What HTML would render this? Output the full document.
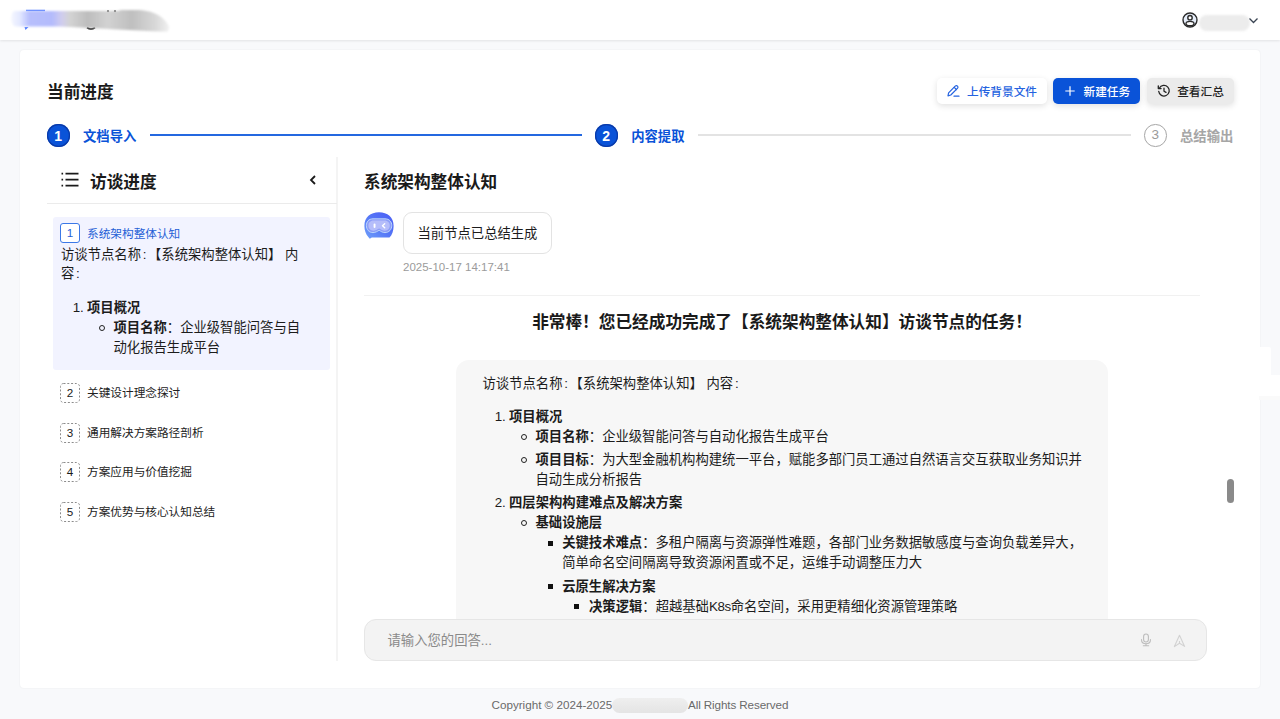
<!DOCTYPE html>
<html lang="zh-CN">
<head>
<meta charset="utf-8">
<title>当前进度</title>
<style>
*{box-sizing:border-box;margin:0;padding:0}
html,body{width:1280px;height:719px;overflow:hidden}
body{background:#f8f9fb;font-family:"Liberation Sans","Noto Sans CJK SC",sans-serif;color:#1a1a1a;font-size:13px;position:relative}
.abs{position:absolute}
#hdr{left:0;top:0;width:1280px;height:40px;background:#fff;box-shadow:0 1px 2.500px rgba(0,0,0,.09)}
#uname{left:1199px;top:15px;width:51px;height:16px;border-radius:8px;background:#ececec;filter:blur(1px)}
#card{left:20px;top:50px;width:1240px;height:638px;background:#fff;border-radius:4px;box-shadow:0 0 2px rgba(0,0,0,.07)}
#title{left:47px;top:80.500px;font-size:16.670px;font-weight:700;line-height:24px;color:#1a1a1a}
.btn{top:77.500px;height:26.500px;border-radius:5px;font-size:11.670px;line-height:27.500px;font-weight:500;white-space:nowrap;box-shadow:0 2px 6px rgba(0,0,0,.12)}
.step-c{width:22.500px;height:22.500px;border-radius:50%;top:124px;font-size:14px;line-height:24.500px;text-align:center;font-weight:700}
.step-t{top:126.500px;font-size:13.330px;line-height:20px;font-weight:700;white-space:nowrap}
.line{height:1.500px;top:134.200px}
.ft{top:696px;font-size:11.670px;color:#6a6a6a;line-height:18px;white-space:nowrap}

.h2{font-size:16.670px;font-weight:700;line-height:24px;white-space:nowrap;color:#1a1a1a}
.t{font-size:13.330px;line-height:20px;white-space:nowrap;color:#1c1c1c}
.t b{font-weight:700}
.c{padding:0 1.700px}
.n{position:absolute;right:100%;margin-right:3.200px;top:0}
.nb{width:20px;height:20px;left:60px;border-radius:3px;font-size:11.670px;line-height:18px;text-align:center}
.nb.d{border:1px dashed #9a9a9a;color:#222}
.it{left:87px;font-size:11.670px;line-height:20px;white-space:nowrap;color:#222}
.bc{width:6px;height:6px;border:1.100px solid #222;border-radius:50%;margin:-.5px 0 0 -.3px}
.bs{width:5px;height:5px;background:#111;margin-top:-.2px}
</style>
</head>
<body>
<div id="hdr" class="abs"></div>
<svg class="abs" style="left:0;top:0" width="200" height="40" viewBox="0 0 200 40">
<defs>
<filter id="bl" x="-10%" y="-60%" width="120%" height="220%"><feGaussianBlur stdDeviation="1.100"/></filter>
<linearGradient id="lg" x1="10" x2="172" y1="0" y2="0" gradientUnits="userSpaceOnUse">
<stop offset="0" stop-color="#f6f8ff"/><stop offset=".06" stop-color="#e4e9ff"/><stop offset=".12" stop-color="#b7bffd"/><stop offset=".26" stop-color="#b4bbfc"/><stop offset=".32" stop-color="#d0cdee"/><stop offset=".37" stop-color="#d3d3d3"/><stop offset=".48" stop-color="#bdbdbd"/><stop offset=".6" stop-color="#d2d2d2"/><stop offset=".75" stop-color="#bfbfbf"/><stop offset=".9" stop-color="#d9d9d9"/><stop offset="1" stop-color="#f6f6f6"/>
</linearGradient>
</defs>
<path d="M26 10.500H45" stroke="#4f7dff" stroke-width="1.500"/>
<path d="M24.500 27L28.500 27L25.500 30Z" fill="#4f7dff"/>
<circle cx="108" cy="11.300" r="1.100" fill="#111"/><circle cx="115" cy="11.300" r="1.100" fill="#111"/>
<path d="M87 27.500Q91 30.500 95 27.500" stroke="#111" stroke-width="1.600" fill="none"/>
<path d="M15 11H118L121 10H140C155 11 166 18 169 27L168 31.500C150 31.500 120 29.500 90 28L60 26.500H16C10 26 10 11 15 11Z" fill="url(#lg)" filter="url(#bl)"/>
</svg>
<svg class="abs" style="left:1180.600px;top:11px" width="18" height="18" viewBox="0 0 18 18" fill="none" stroke="#2b2b2b" stroke-width="1.400"><circle cx="9" cy="9" r="7" fill="#e6eefa"/><circle cx="9" cy="6.700" r="2.200" fill="#fff"/><ellipse cx="9" cy="12.600" rx="4" ry="2.200" fill="#fff"/></svg>
<div id="uname" class="abs"></div>
<svg class="abs" style="left:1248px;top:16.500px" width="11" height="8" viewBox="0 0 11 8" fill="none" stroke="#3a4453" stroke-width="1.3"><path d="M1.500 1.500l4 4 4-4"/></svg>

<div id="card" class="abs"></div>
<div id="title" class="abs">当前进度</div>

<div class="abs btn" style="left:937px;width:110px;background:#fff;color:#2563e0;padding-left:30px">上传背景文件</div>
<svg class="abs" style="left:946px;top:84px" width="15" height="14" viewBox="0 0 15 14" fill="none" stroke="#2563e0" stroke-width="1.200" stroke-linejoin="round" stroke-linecap="round"><path d="M2 11.800L2.600 8.800L9.200 2.200C9.900 1.500 10.900 1.500 11.500 2.100C12.100 2.700 12.100 3.700 11.400 4.400L4.800 11L2 11.800Z"/><path d="M8.200 3.300L10.400 5.500"/><path d="M8 12.200H13"/></svg>
<div class="abs btn" style="left:1053.300px;width:86.700px;background:#0a53d8;color:#fff;padding-left:30.200px;font-weight:500">新建任务</div>
<svg class="abs" style="left:1065px;top:85.600px" width="10" height="10" viewBox="0 0 10 10" fill="none" stroke="#fff" stroke-width="1.200"><path d="M5 .3V9.700M.3 5H9.700"/></svg>
<div class="abs btn" style="left:1146.500px;width:87px;background:#ebebeb;color:#222;padding-left:30.700px">查看汇总</div>
<svg class="abs" style="left:1156.500px;top:83.500px" width="14" height="14" viewBox="0 0 14 14" fill="none" stroke="#222" stroke-width="1.300" stroke-linecap="round" stroke-linejoin="round"><path d="M2.300 4.200A5.300 5.300 0 1 1 1.700 7.300"/><path d="M1.300 1.800V4.600H4.100"/><path d="M7 4.200V7.200L9 8.400"/></svg>

<div class="abs step-c" style="left:47px;background:#0a53d8;color:#fff;box-shadow:inset 0 0 0 1.200px #0a3aa8">1</div>
<div class="abs step-t" style="left:83px;color:#0a53d8">文档导入</div>
<div class="abs line" style="left:149.500px;width:432.500px;background:#2468e0"></div>
<div class="abs step-c" style="left:595px;background:#0a53d8;color:#fff;box-shadow:inset 0 0 0 1.200px #0a3aa8">2</div>
<div class="abs step-t" style="left:631.200px;color:#0a53d8">内容提取</div>
<div class="abs line" style="left:698px;width:433px;height:1.500px;top:134.400px;background:#e3e3e3"></div>
<div class="abs step-c" style="left:1144px;top:124.300px;border:1.300px solid #a6a6a6;color:#9a9a9a;line-height:20.500px;font-size:13.500px;font-weight:500">3</div>
<div class="abs step-t" style="left:1180px;color:#a6a6a6">总结输出</div>


<!-- left panel -->
<div class="abs" style="left:336px;top:157px;width:2px;height:504px;background:#f4f4f4"></div>
<svg class="abs" style="left:60px;top:172px" width="20" height="16" viewBox="0 0 20 16" fill="none" stroke="#1a1a1a" stroke-width="1.800"><path d="M5.500 1.700H18.500M5.500 7.700H18.500M5.500 13.700H18.500"/><path d="M1.500 1.700H3.100M1.500 7.700H3.100M1.500 13.700H3.100"/></svg>
<div class="abs h2" style="left:90px;top:170.800px">访谈进度</div>
<svg class="abs" style="left:308px;top:174px" width="10" height="12" viewBox="0 0 10 12" fill="none" stroke="#1a1a1a" stroke-width="1.800"><path d="M7 2L3 6L7 10"/></svg>
<div class="abs" style="left:47px;top:203px;width:290px;height:1px;background:#ebebeb"></div>

<div class="abs" style="left:53px;top:217px;width:277px;height:153px;background:#f2f3ff;border-radius:3px"></div>
<div class="abs nb" style="top:223.200px;border:1px solid #3b78e7;color:#1f5fd6;background:#fff">1</div>
<div class="abs it" style="top:223.500px;color:#1f5fd6">系统架构整体认知</div>
<div class="abs t" style="left:61px;top:245px">访谈节点名称<span class="c">:</span>【系统架构整体认知】 内</div>
<div class="abs t" style="left:61px;top:264px">容<span class="c">:</span></div>
<div class="abs t" style="left:87px;top:297.500px"><span class="n">1.</span><b>项目概况</b></div>
<div class="abs bc" style="left:99px;top:325px"></div>
<div class="abs t" style="left:113.500px;top:317.500px"><b>项目名称</b>：企业级智能问答与自</div>
<div class="abs t" style="left:113.500px;top:337.500px">动化报告生成平台</div>

<svg class="abs" style="left:60px;top:383px" width="20" height="20" viewBox="0 0 20 20"><rect x=".5" y=".5" width="19" height="19" rx="3" fill="none" stroke="#8c8c8c" stroke-dasharray="2 1.800"/></svg><div class="abs nb" style="top:383px;line-height:20px">2</div><div class="abs it" style="top:383px">关键设计理念探讨</div>
<svg class="abs" style="left:60px;top:422.500px" width="20" height="20" viewBox="0 0 20 20"><rect x=".5" y=".5" width="19" height="19" rx="3" fill="none" stroke="#8c8c8c" stroke-dasharray="2 1.800"/></svg><div class="abs nb" style="top:422.500px;line-height:20px">3</div><div class="abs it" style="top:422.500px">通用解决方案路径剖析</div>
<svg class="abs" style="left:60px;top:462px" width="20" height="20" viewBox="0 0 20 20"><rect x=".5" y=".5" width="19" height="19" rx="3" fill="none" stroke="#8c8c8c" stroke-dasharray="2 1.800"/></svg><div class="abs nb" style="top:462px;line-height:20px">4</div><div class="abs it" style="top:462px">方案应用与价值挖掘</div>
<svg class="abs" style="left:60px;top:501.500px" width="20" height="20" viewBox="0 0 20 20"><rect x=".5" y=".5" width="19" height="19" rx="3" fill="none" stroke="#8c8c8c" stroke-dasharray="2 1.800"/></svg><div class="abs nb" style="top:501.500px;line-height:20px">5</div><div class="abs it" style="top:501.500px">方案优势与核心认知总结</div>

<!-- right panel -->
<div class="abs h2" style="left:364px;top:170.800px">系统架构整体认知</div>
<svg class="abs" style="left:358px;top:205px" width="44" height="40" viewBox="0 0 44 40"><defs><linearGradient id="ag" x1="0" y1="1" x2="1" y2="0"><stop offset="0" stop-color="#6fa0fa"/><stop offset=".5" stop-color="#5576f6"/><stop offset="1" stop-color="#4a5cf5"/></linearGradient></defs><path d="M6.400 21C6.400 12 12.500 7.200 21 7.200C29.500 7.200 35.600 12 35.600 21C35.600 26 34 30 31.500 32.600L13.800 32.600L11.800 33.800L10.300 32C7.800 29 6.400 25.500 6.400 21Z" fill="url(#ag)"/><path d="M15 13.800H27C31.500 13.800 33.800 17 33.800 20.500C33.800 24.500 31 27.600 27 27.600C24.500 27.600 22.800 26.300 21.100 25.300C19.400 26.300 17.500 27.600 15 27.600C11 27.600 8.400 24.500 8.400 20.500C8.400 17 10.500 13.800 15 13.800Z" fill="#8c9df7" stroke="#c3dcfc" stroke-width=".9"/><path d="M15.500 15.600H26.500C29.800 15.600 31.800 18 31.800 20.600C31.800 23.500 29.800 25.800 26.800 25.800C24.800 25.800 23 24.500 21.100 23.500C19.200 24.500 17.400 25.800 15.400 25.800C12.400 25.800 10.400 23.500 10.400 20.600C10.400 18 12.200 15.600 15.500 15.600Z" fill="#b5bdfa"/><rect x="15.600" y="18.500" width="1.900" height="4.500" rx=".9" fill="#fff"/><path d="M26.700 18.800L24.500 20.800L26.700 22.800" fill="none" stroke="#fff" stroke-width="1.400" stroke-linecap="round" stroke-linejoin="round"/></svg>
<div class="abs" style="left:403px;top:212px;width:149px;height:42px;border:1px solid #e3e3e3;border-radius:9px;background:#fff"></div>
<div class="abs t" style="left:417.500px;top:223.500px">当前节点已总结生成</div>
<div class="abs" style="left:403px;top:258px;font-size:11.500px;line-height:18px;color:#9b9b9b;white-space:nowrap">2025-10-17 14:17:41</div>
<div class="abs" style="left:364px;top:294.800px;width:836px;height:1.500px;background:#f1f1f1"></div>
<div class="abs h2" style="left:364px;top:311.300px;width:836px;text-align:center">非常棒！您已经成功完成了【系统架构整体认知】访谈节点的任务！</div>

<div class="abs" style="left:455.500px;top:359.500px;width:652.500px;height:260px;background:#f7f7f7;border-radius:13px 13px 0 0"></div>
<div class="abs t" style="left:482.500px;top:373.500px">访谈节点名称<span class="c">:</span>【系统架构整体认知】 内容<span class="c">:</span></div>
<div class="abs t" style="left:509px;top:407px"><span class="n">1.</span><b>项目概况</b></div>
<div class="abs bc" style="left:521px;top:434.500px"></div>
<div class="abs t" style="left:535.500px;top:427px"><b>项目名称</b>：企业级智能问答与自动化报告生成平台</div>
<div class="abs bc" style="left:521px;top:457.500px"></div>
<div class="abs t" style="left:535.500px;top:450px"><b>项目目标</b>：为大型金融机构构建统一平台，赋能多部门员工通过自然语言交互获取业务知识并</div>
<div class="abs t" style="left:535.500px;top:470px">自动生成分析报告</div>
<div class="abs t" style="left:509px;top:493.300px"><span class="n">2.</span><b>四层架构构建难点及解决方案</b></div>
<div class="abs bc" style="left:521px;top:520.800px"></div>
<div class="abs t" style="left:535.500px;top:513.300px"><b>基础设施层</b></div>
<div class="abs bs" style="left:548.100px;top:541.300px"></div>
<div class="abs t" style="left:562.200px;top:533.300px"><b>关键技术难点</b>：多租户隔离与资源弹性难题，各部门业务数据敏感度与查询负载差异大，</div>
<div class="abs t" style="left:562.200px;top:553.300px">简单命名空间隔离导致资源闲置或不足，运维手动调整压力大</div>
<div class="abs bs" style="left:548.100px;top:584.600px"></div>
<div class="abs t" style="left:562.200px;top:576.600px"><b>云原生解决方案</b></div>
<div class="abs bs" style="left:574.300px;top:604.600px"></div>
<div class="abs t" style="left:589px;top:596.600px"><b>决策逻辑</b>：超越基础<span style="letter-spacing:-.4px">K8s</span>命名空间，采用更精细化资源管理策略</div>
<div class="abs" style="left:364px;top:619px;width:870px;height:44px;background:#fff"></div>

<div class="abs" style="left:364px;top:619px;width:842.500px;height:42px;background:#f3f3f3;border:1px solid #e6e6e6;border-radius:12px"></div>
<div class="abs t" style="left:387.500px;top:630.500px;color:#8a8a8a">请输入您的回答...</div>
<svg class="abs" style="left:1140px;top:633px" width="12" height="14" viewBox="0 0 12 14" fill="none" stroke="#bdbdbd" stroke-width="1.100" stroke-linecap="round"><rect x="3.600" y="1" width="4.800" height="8" rx="2.400"/><path d="M1.500 6.500C1.500 9.300 3.500 10.800 6 10.800C8.500 10.800 10.500 9.300 10.500 6.500"/><path d="M6 10.800V12.600M3.300 12.700H8.700"/></svg>
<svg class="abs" style="left:1173px;top:633.500px" width="13" height="14" viewBox="0 0 13 14" fill="none" stroke="#d2d2d2" stroke-width="1.100" stroke-linejoin="round"><path d="M6.500 1.300L11.600 12.400L6.500 9.200L1.400 12.600Z"/><path d="M6.500 9.200V7"/></svg>
<div class="abs" style="left:1227px;top:479px;width:6.500px;height:23.500px;border-radius:3.500px;background:#8a8a8a"></div>
<div class="abs" style="left:1259px;top:347px;width:12px;height:29px;background:#fff;border-radius:0 2px 0 0"></div>
<div class="abs" style="left:1259px;top:375px;width:21px;height:21px;background:#fff"></div>
<div class="abs" style="left:1259px;top:396px;width:21px;height:4px;background:#fafafa"></div>
<div class="abs ft" style="left:491.500px">Copyright © 2024-2025</div>
<div class="abs ft" style="left:688px;letter-spacing:-.11px">All Rights Reserved</div>
<div class="abs" style="left:612px;top:697.500px;width:75.500px;height:15.500px;border-radius:8px;background:linear-gradient(#efefef,#e4e4e4);filter:blur(.4px)"></div>
</body>
</html>
